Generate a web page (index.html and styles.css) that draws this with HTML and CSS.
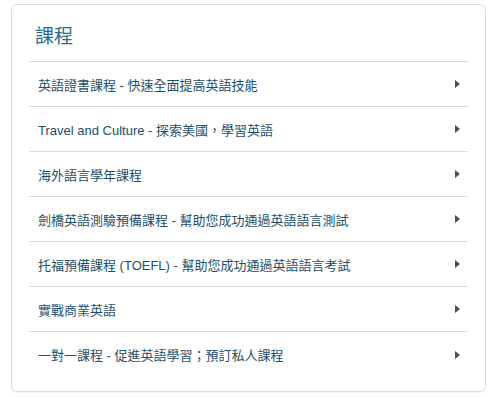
FILE: index.html
```html
<!doctype html>
<html>
    <head>
        <meta charset="utf-8">
        <link rel="stylesheet" href="styles.css">
    </head>

    <body>
    <div class="panel">
        <h2 class="panel-title">課程</h2>
        <ul class="course-list">
            <li><span>英語證書課程 - 快速全面提高英語技能</span><i class="arrow"></i></li>
            <li><span>Travel and Culture - 探索美國，學習英語</span><i class="arrow"></i></li>
            <li><span>海外語言學年課程</span><i class="arrow"></i></li>
            <li><span>劍橋英語測驗預備課程 - 幫助您成功通過英語語言測試</span><i class="arrow"></i></li>
            <li><span>托福預備課程 (TOEFL) - 幫助您成功通過英語語言考試</span><i class="arrow"></i></li>
            <li><span>實戰商業英語</span><i class="arrow"></i></li>
            <li><span>一對一課程 - 促進英語學習；預訂私人課程</span><i class="arrow"></i></li>
        </ul>
    </div>
    </body>
</html>
```

FILE: styles.css
```css
body {
    margin: 0;
    padding: 4px 14px 5px 11px;
    background-color: white;
    font-family: "Liberation Sans", "Noto Sans CJK TC", sans-serif;
}
* {
    box-sizing: border-box;
}

.panel {
    height: 388px;
    border: 1px solid #d6dee4;
    border-radius: 6px;
    padding: 0 17px 0 17px;
    box-shadow: 0 1px 1px rgba(0, 0, 0, 0.06);
}

.panel-title {
    margin: 0;
    padding: 20px 0 0 6px;
    height: 57px;
    font-size: 19px;
    line-height: 24px;
    font-weight: normal;
    color: #2a6a8b;
    border-bottom: 1px solid #d3dce2;
}

.course-list {
    margin: 0;
    padding: 0;
    list-style-type: none;
}

.course-list li {
    display: flex;
    align-items: center;
    justify-content: space-between;
    height: 45px;
    padding: 0 8px 0 9px;
    font-size: 13px;
    color: #1f4e68;
    border-bottom: 1px solid #d3dce2;
}

.course-list li:last-child {
    border-bottom: none;
}

.arrow {
    width: 0;
    height: 0;
    border-top: 4px solid transparent;
    border-bottom: 4px solid transparent;
    border-left: 5px solid #3d5068;
}
```
